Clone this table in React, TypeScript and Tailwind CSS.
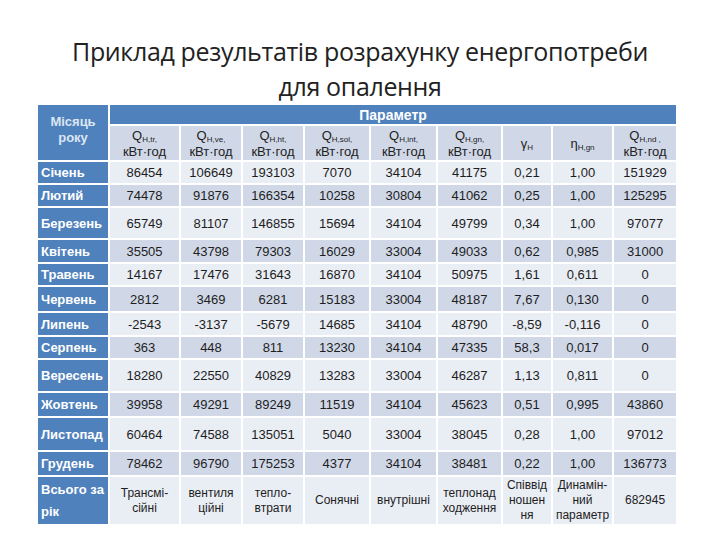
import React from "react";

type Row = { month: string; h: string; values: string[] };

const rows: Row[] = [
  { month: "Січень", h: "h-[23px]", values: ["86454", "106649", "193103", "7070", "34104", "41175", "0,21", "1,00", "151929"] },
  { month: "Лютий", h: "h-[23px]", values: ["74478", "91876", "166354", "10258", "30804", "41062", "0,25", "1,00", "125295"] },
  { month: "Березень", h: "h-[32px]", values: ["65749", "81107", "146855", "15694", "34104", "49799", "0,34", "1,00", "97077"] },
  { month: "Квітень", h: "h-[24px]", values: ["35505", "43798", "79303", "16029", "33004", "49033", "0,62", "0,985", "31000"] },
  { month: "Травень", h: "h-[23px]", values: ["14167", "17476", "31643", "16870", "34104", "50975", "1,61", "0,611", "0"] },
  { month: "Червень", h: "h-[26px]", values: ["2812", "3469", "6281", "15183", "33004", "48187", "7,67", "0,130", "0"] },
  { month: "Липень", h: "h-[24px]", values: ["-2543", "-3137", "-5679", "14685", "34104", "48790", "-8,59", "-0,116", "0"] },
  { month: "Серпень", h: "h-[23px]", values: ["363", "448", "811", "13230", "34104", "47335", "58,3", "0,017", "0"] },
  { month: "Вересень", h: "h-[33px]", values: ["18280", "22550", "40829", "13283", "33004", "46287", "1,13", "0,811", "0"] },
  { month: "Жовтень", h: "h-[25px]", values: ["39958", "49291", "89249", "11519", "34104", "45623", "0,51", "0,995", "43860"] },
  { month: "Листопад", h: "h-[34px]", values: ["60464", "74588", "135051", "5040", "33004", "38045", "0,28", "1,00", "97012"] },
  { month: "Грудень", h: "h-[25px]", values: ["78462", "96790", "175253", "4377", "34104", "38481", "0,22", "1,00", "136773"] },
];

const heads: { sym: string; sub: string; unit: boolean }[] = [
  { sym: "Q", sub: "H,tr,", unit: true },
  { sym: "Q", sub: "H,ve,", unit: true },
  { sym: "Q", sub: "H,ht,", unit: true },
  { sym: "Q", sub: "H,sol,", unit: true },
  { sym: "Q", sub: "H,int,", unit: true },
  { sym: "Q", sub: "H,gn,", unit: true },
  { sym: "γ", sub: "H", unit: false },
  { sym: "η", sub: "H,gn", unit: false },
  { sym: "Q", sub: "H,nd ,", unit: true },
];

const totals: string[][] = [
  ["Трансмі-", "сійні"],
  ["вентиля", "ційні"],
  ["тепло-", "втрати"],
  ["Сонячні"],
  ["внутрішні"],
  ["теплонад", "ходження"],
  ["Співвід", "ношен", "ня"],
  ["Динамін-", "ний", "параметр"],
  ["682945"],
];

const widths = ["w-[72px]", "w-[71px]", "w-[62px]", "w-[62px]", "w-[66px]", "w-[67px]", "w-[65px]", "w-[50px]", "w-[61px]", "w-[64px]"];

const App = () => {
  return (
    <div className="w-[720px] h-[540px] bg-white overflow-hidden" style={{ fontFamily: '"Liberation Sans", Arial, sans-serif' }}>
      <h1
        className="pt-[34px] text-center text-[25px] leading-[35px] text-[#222] font-normal"
        style={{ fontFamily: '"Open Sans", "Noto Sans", sans-serif', letterSpacing: "-0.35px" }}
      >
        Приклад результатів розрахунку енергопотреби
        <br />
        для опалення
      </h1>

      <table className="ml-[36px] mt-[-1px] w-[642px] table-fixed border-collapse text-[13px] text-[#1e1e1e]">
        <colgroup>
          {widths.map((w, i) => (
            <col key={i} className={w} />
          ))}
        </colgroup>
        <thead>
          <tr className="h-[21px]">
            <th
              rowSpan={2}
              className="border-2 border-white bg-[#4f81bd] text-[#dce6f2] font-bold text-[13px] leading-[16px] align-middle pb-[6px]"
            >
              Місяць
              <br />
              року
            </th>
            <th colSpan={9} className="border-2 border-white bg-[#4f81bd] text-white font-bold text-[14px] leading-[16px]">
              Параметр
            </th>
          </tr>
          <tr className="h-[36px]">
            {heads.map((h, i) => (
              <th key={i} className="border-2 border-white bg-[#d0d8e8] font-normal px-0 text-[#222]">
                <div className="leading-[15px]">
                  {h.sym}
                  <span className="text-[8px] leading-none relative top-[2px]">{h.sub}</span>
                </div>
                {h.unit && <div className="leading-[15px] mt-[1px]">кВт·год</div>}
              </th>
            ))}
          </tr>
        </thead>
        <tbody>
          {rows.map((r, ri) => (
            <tr key={r.month} className={r.h}>
              <td className="border-2 border-white bg-[#4f81bd] text-white font-bold pl-[3px] leading-[15px]">{r.month}</td>
              {r.values.map((v, vi) => (
                <td
                  key={vi}
                  className={`border-2 border-white text-center leading-[15px] ${ri % 2 === 0 ? "bg-[#e9edf4]" : "bg-[#d0d8e8]"}`}
                >
                  {v}
                </td>
              ))}
            </tr>
          ))}
          <tr className="h-[49px]">
            <td className="border-2 border-white bg-[#4f81bd] text-white font-bold pl-[3px] leading-[22px] align-top pt-[2px]">
              Всього за
              <br />
              рік
            </td>
            {totals.map((t, ti) => (
              <td key={ti} className="border-2 border-white bg-[#e9edf4] text-center text-[12px] leading-[15px]">
                {t.map((l, li) => (
                  <div key={li}>{l}</div>
                ))}
              </td>
            ))}
          </tr>
        </tbody>
      </table>
    </div>
  );
};

export default App;
